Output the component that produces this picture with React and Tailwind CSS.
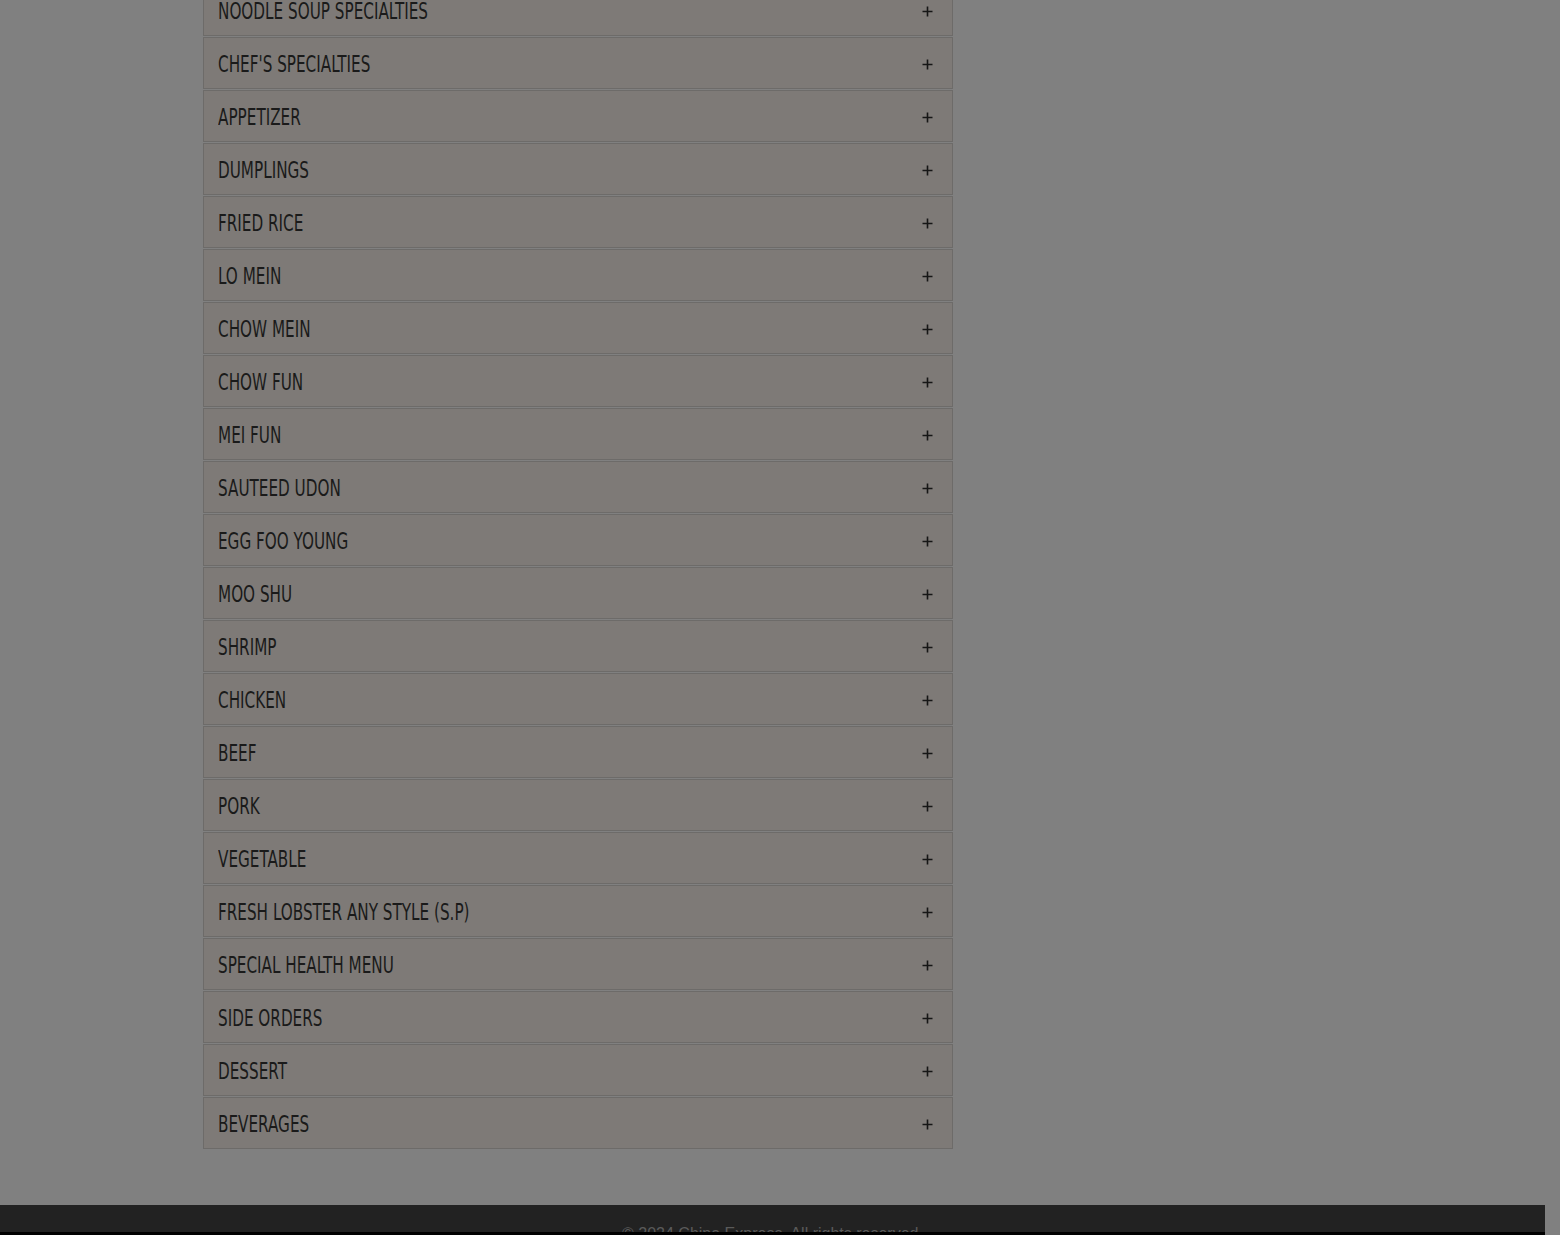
import React from "react";

const items = [
  "NOODLE SOUP SPECIALTIES",
  "CHEF'S SPECIALTIES",
  "APPETIZER",
  "DUMPLINGS",
  "FRIED RICE",
  "LO MEIN",
  "CHOW MEIN",
  "CHOW FUN",
  "MEI FUN",
  "SAUTEED UDON",
  "EGG FOO YOUNG",
  "MOO SHU",
  "SHRIMP",
  "CHICKEN",
  "BEEF",
  "PORK",
  "VEGETABLE",
  "FRESH LOBSTER ANY STYLE (S.P)",
  "SPECIAL HEALTH MENU",
  "SIDE ORDERS",
  "DESSERT",
  "BEVERAGES",
];

function Plus() {
  return (
    <svg width="11" height="11" viewBox="0 0 11 11" className="block mt-[3px]">
      <path d="M5.5 0.5V10.5M0.5 5.5H10.5" stroke="#161616" strokeWidth="1.6" />
    </svg>
  );
}

export default function App() {
  return (
    <div className="w-[1560px] h-[1235px] overflow-hidden bg-[#808080] flex flex-col">
      <div className="ml-[203px] w-[750px] -mt-[16px] flex flex-col">
        {items.map((t) => (
          <div
            key={t}
            className="h-[52px] mb-px border border-[#6d6b69] bg-[#7e7a77] flex items-center justify-between pl-[14px] pr-[19px]"
          >
            <span
              className="mt-[3px] inline-block origin-left scale-x-[0.72] whitespace-nowrap text-[#1a1a1a] text-[23.5px] leading-none"
              style={{ fontFamily: '"DejaVu Sans Condensed", "Liberation Sans", sans-serif' }}
            >
              {t}
            </span>
            <Plus />
          </div>
        ))}
      </div>
      <div className="mt-[55px] w-[1545px] flex flex-col">
        <div className="h-[27px] bg-[#222222] overflow-hidden flex justify-center">
          <span
            className="mt-[21px] text-[16px] text-[#5a5a5a] leading-none"
            style={{ fontFamily: '"Liberation Sans", sans-serif' }}
          >
            © 2024 China Express. All rights reserved.
          </span>
        </div>
        <div className="h-[10px] bg-black" />
      </div>
    </div>
  );
}
